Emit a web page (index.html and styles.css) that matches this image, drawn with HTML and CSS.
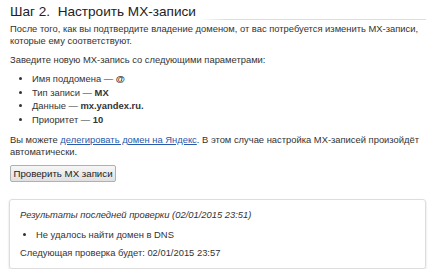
FILE: index.html
```html
<!DOCTYPE html>
<html lang="ru">
<head>
    <meta charset="UTF-8">
    <title>Шаг 2. Настроить MX-записи</title>
    <link rel="stylesheet" href="styles.css">
</head>
<body>

<div class="step">
    <div class="step-head">
        <h2>Шаг 2.&nbsp; Настроить MX-записи</h2>
        <div class="step-line"></div>
    </div>

    <p class="intro">После того, как вы подтвердите владение доменом, от вас потребуется изменить MX-записи, которые ему соответствуют.</p>

    <p>Заведите новую MX-запись со следующими параметрами:</p>
    <ul class="params">
        <li>Имя поддомена — <b>@</b></li>
        <li>Тип записи — <b>MX</b></li>
        <li>Данные — <b>mx.yandex.ru.</b></li>
        <li>Приоритет — <b>10</b></li>
    </ul>

    <p>Вы можете <a href="#">делегировать домен на Яндекс</a>. В этом случае настройка MX-записей произойдёт автоматически.</p>

    <button type="button" class="check-btn">Проверить MX записи</button>

    <div class="result">
        <div class="result-title">Результаты последней проверки (02/01/2015 23:51)</div>
        <ul class="result-list">
            <li>Не удалось найти домен в DNS</li>
        </ul>
        <div class="result-next">Следующая проверка будет: 02/01/2015 23:57</div>
    </div>
</div>

</body>
</html>
```

FILE: styles.css
```css
body {
    font-family: "Liberation Sans", Arial, sans-serif;
    font-size: 9.4px;
    line-height: 12px;
    color: #333;
    background-color: #fff;
    margin: 0;
}
.step {
    padding: 2px 8px 0 10px;
}
.step-head {
    display: flex;
    align-items: flex-end;
    gap: 3px;
}
h2 {
    font-size: 13.6px;
    font-weight: normal;
    line-height: 20px;
    margin: 0;
    color: #222;
    white-space: nowrap;
}
.step-line {
    flex: 1;
    height: 1px;
    margin-bottom: 2px;
    background: linear-gradient(to right, #fff, #ddd 12%);
}
p {
    margin: 7px 0 0;
}
p.intro {
    margin-top: 1px;
}
.params {
    margin: 6px 0 0;
    padding-left: 22px;
}
.params li {
    line-height: 13.7px;
}
a {
    color: #2a5aab;
}
.check-btn {
    display: block;
    font-family: inherit;
    font-size: 9.7px;
    color: #222;
    white-space: nowrap;
    width: 106px;
    height: 17px;
    padding: 0;
    margin-top: 7px;
    border: 1px solid #b0b0b0;
    border-radius: 2px;
    background: linear-gradient(#f6f6f6, #e0e0e0);
}
.result {
    margin: 17px 0 0 -1px;
    border: 1px solid #ddd;
    border-radius: 3px;
    box-shadow: 0 1px 2px rgba(0, 0, 0, 0.18);
    padding: 9px 10px 9px;
}
.result-title {
    font-style: italic;
}
.result-list {
    margin: 8px 0 6px;
    padding-left: 16px;
}
```
